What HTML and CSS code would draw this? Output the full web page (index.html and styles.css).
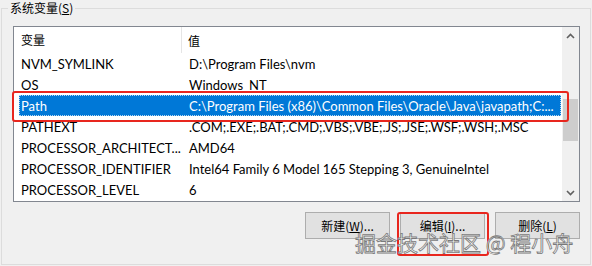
FILE: index.html
```html
<!DOCTYPE html>
<html lang="zh-CN">

<head>
  <meta charset="UTF-8">
  <meta name="viewport" content="width=device-width, initial-scale=1.0">
  <title>系统变量</title>
  <link rel="stylesheet" href="styles.css">
</head>

<body>
  <fieldset class="group">
    <legend class="cjk">系统变量(<u>S</u>)</legend>
    <div class="listbox">
      <div class="list">
        <div class="head">
          <span class="cell name cjk">变量</span>
          <span class="cell value cjk">值</span>
        </div>
        <div class="row"><span class="cell">NVM_SYMLINK</span><span class="cell">D:\Program Files\nvm</span></div>
        <div class="row"><span class="cell">OS</span><span class="cell">Windows_NT</span></div>
        <div class="row selected"><span class="cell">Path</span><span class="cell">C:\Program Files (x86)\Common Files\Oracle\Java\javapath;C:...</span></div>
        <div class="row"><span class="cell">PATHEXT</span><span class="cell">.COM;.EXE;.BAT;.CMD;.VBS;.VBE;.JS;.JSE;.WSF;.WSH;.MSC</span></div>
        <div class="row"><span class="cell">PROCESSOR_ARCHITECT...</span><span class="cell">AMD64</span></div>
        <div class="row"><span class="cell">PROCESSOR_IDENTIFIER</span><span class="cell">Intel64 Family 6 Model 165 Stepping 3, GenuineIntel</span></div>
        <div class="row"><span class="cell">PROCESSOR_LEVEL</span><span class="cell">6</span></div>
      </div>
      <div class="scrollbar">
        <span class="arrow">
          <svg width="9" height="6" viewBox="0 0 9 6"><path d="M1 5 L4.5 1.5 L8 5" fill="none" stroke="#606060" stroke-width="1.6"/></svg>
        </span>
        <span class="track"><i class="thumb"></i></span>
        <span class="arrow">
          <svg width="9" height="6" viewBox="0 0 9 6"><path d="M1 1 L4.5 4.5 L8 1" fill="none" stroke="#606060" stroke-width="1.6"/></svg>
        </span>
      </div>
    </div>
    <div class="buttons">
      <button class="cjk">新建(<u>W</u>)...</button>
      <button class="cjk marked">编辑(<u>I</u>)...</button>
      <button class="cjk">删除(<u>L</u>)</button>
    </div>
  </fieldset>
  <div class="watermark">掘金技术社区 @ 程小舟</div>
</body>

</html>
```

FILE: styles.css
```css
body {
  margin: 0;
  width: 592px;
  height: 266px;
  overflow: hidden;
  background: #f0f0f0;
  font-family: Lato, "Noto Sans CJK SC", sans-serif;
  font-size: 13px;
  color: #000;
  position: relative;
}

.cjk {
  font-family: "Noto Sans CJK SC", sans-serif;
  font-size: 12px;
}

.group {
  margin: 0 1px;
  width: 590px;
  height: 265px;
  box-sizing: border-box;
  border: 1px solid #dcdcdc;
  padding: 10px 10px 0 11px;
  min-width: 0;
}

.group legend {
  padding: 0 2px;
  margin-left: -5px;
  line-height: 16px;
  height: 16px;
}

.listbox {
  width: 567px;
  height: 176px;
  box-sizing: border-box;
  border: 1px solid #828790;
  background: #fff;
  display: flex;
}

.list {
  flex: 1;
}

/* 表头 */
.head {
  height: 26px;
  display: grid;
  grid-template-columns: 168px 1fr;
  align-items: center;
}

.head .name {
  padding-left: 7px;
  height: 26px;
  line-height: 25px;
  border-right: 1px solid #e5e5e5;
}

.head .value {
  padding-left: 6px;
  line-height: 25px;
}

.row {
  height: 21px;
  line-height: 22px;
  margin-left: 5px;
  margin-right: 1px;
  display: grid;
  grid-template-columns: 168px 1fr;
  position: relative;
}

.cell {
  padding: 0 2px;
  white-space: nowrap;
  overflow: hidden;
}

/* 选中的 Path 行 */
.row.selected {
  background: #0078d7;
  color: #fff;
  outline: 1px dotted rgba(255, 255, 255, 0.7);
  outline-offset: -1px;
}

.row.selected::after {
  content: "";
  position: absolute;
  left: -7px;
  right: -8px;
  top: -4px;
  bottom: -6px;
  border: 2px solid #e8261e;
  border-radius: 3px;
}

.scrollbar {
  width: 17px;
  background: #f0f0f0;
  display: flex;
  flex-direction: column;
}

.scrollbar .arrow {
  height: 17px;
  display: flex;
  align-items: center;
  justify-content: center;
}

.scrollbar .track {
  flex: 1;
  padding: 0 1px;
}

.scrollbar .thumb {
  display: block;
  height: 42px;
  margin-top: 55px;
  background: #cdcdcd;
}

.buttons {
  margin-top: 10px;
  padding-right: 1px;
  width: 567px;
  display: flex;
  justify-content: flex-end;
  gap: 10px;
}

.buttons button {
  width: 85px;
  height: 27px;
  padding: 0;
  background: #e1e1e1;
  border: 1px solid #adadad;
  color: #000;
  position: relative;
}

.buttons button.marked::after {
  content: "";
  position: absolute;
  left: -4px;
  right: -5px;
  top: -1px;
  bottom: -18px;
  border: 2px solid #e8261e;
  border-radius: 3px;
}

/* 水印 */
.watermark {
  position: absolute;
  left: 355px;
  top: 228px;
  font-family: "Noto Sans CJK SC", sans-serif;
  font-size: 21px;
  line-height: 28px;
  color: #fbfbfb;
  -webkit-text-stroke: 0.8px #7a7a7a;
  white-space: nowrap;
}
```
